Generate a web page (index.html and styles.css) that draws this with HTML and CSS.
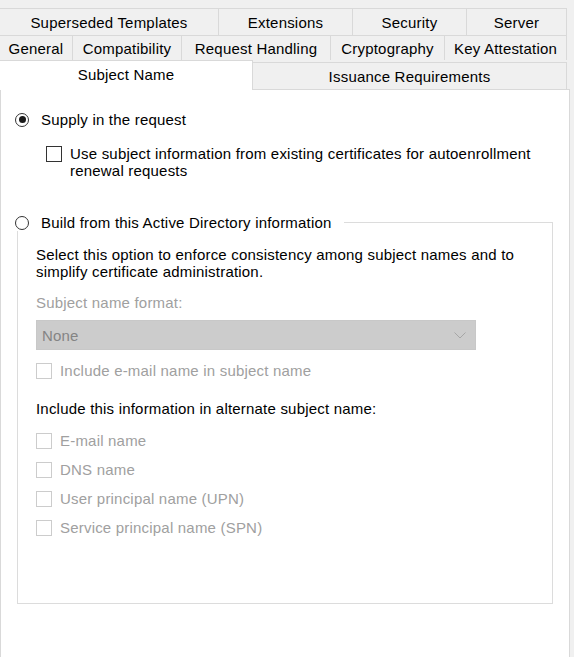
FILE: index.html
```html
<!DOCTYPE html>
<html>
<head>
<meta charset="utf-8">
<title>Subject Name</title>
<link rel="stylesheet" href="styles.css">
</head>
<body>
<div class="dialog">
  <div class="tabs">
    <div class="tab-row row1">
      <div class="tab t-superseded">Superseded Templates</div>
      <div class="tab t-extensions">Extensions</div>
      <div class="tab t-security">Security</div>
      <div class="tab t-server">Server</div>
    </div>
    <div class="tab-row row2">
      <div class="tab t-general">General</div>
      <div class="tab t-compat">Compatibility</div>
      <div class="tab t-request">Request Handling</div>
      <div class="tab t-crypto">Cryptography</div>
      <div class="tab t-key">Key Attestation</div>
    </div>
    <div class="tab-row row3">
      <div class="tab t-subject active">Subject Name</div>
      <div class="tab t-issuance">Issuance Requirements</div>
    </div>
  </div>

  <div class="panel">
    <div class="radio-row supply">
      <span class="radio checked"></span>
      <span class="label">Supply in the request</span>
    </div>

    <div class="check-row renew">
      <span class="checkbox"></span>
      <span class="label wrap">Use subject information from existing certificates for autoenrollment renewal requests</span>
    </div>

    <fieldset class="group">
      <legend class="group-legend">
        <span class="legend-inner">
          <span class="radio"></span>
          <span class="label">Build from this Active Directory information</span>
        </span>
      </legend>

      <p class="desc">Select this option to enforce consistency among subject names and to simplify certificate administration.</p>

      <div class="field-label disabled">Subject name format:</div>
      <div class="combo">
        <span class="combo-text">None</span>
        <svg class="chevron" width="12" height="7" viewBox="0 0 12 7"><polyline points="0.5,0.5 6,6 11.5,0.5" fill="none" stroke="#a6a6a6" stroke-width="1"/></svg>
      </div>

      <div class="check-row dis include-email">
        <span class="checkbox off"></span>
        <span class="label disabled">Include e-mail name in subject name</span>
      </div>

      <div class="alt-title">Include this information in alternate subject name:</div>

      <div class="alt-list">
        <div class="check-row dis">
          <span class="checkbox off"></span>
          <span class="label disabled">E-mail name</span>
        </div>
        <div class="check-row dis">
          <span class="checkbox off"></span>
          <span class="label disabled">DNS name</span>
        </div>
        <div class="check-row dis">
          <span class="checkbox off"></span>
          <span class="label disabled">User principal name (UPN)</span>
        </div>
        <div class="check-row dis">
          <span class="checkbox off"></span>
          <span class="label disabled">Service principal name (SPN)</span>
        </div>
      </div>
    </fieldset>
  </div>
</div>
</body>
</html>
```

FILE: styles.css
```css
html, body {
  margin: 0;
  padding: 0;
}

body {
  background: #f0f0f0;
  font-family: "Liberation Sans", Arial, sans-serif;
  font-size: 15px;
  letter-spacing: 0.2px;
  color: #000;
  width: 574px;
  height: 657px;
  overflow: hidden;
}

.dialog {
  width: 574px;
}

/* ---------- tabs ---------- */
.tabs {
  padding-top: 8px;
  margin-left: -1px;
}

.tab-row {
  display: flex;
}

.tab {
  box-sizing: border-box;
  border: 1px solid #d9d9d9;
  border-bottom: none;
  background: #f0f0f0;
  display: flex;
  align-items: center;
  justify-content: center;
  white-space: nowrap;
  flex: none;
}

.tab + .tab {
  margin-left: -1px;
}

.row1 .tab { height: 27px; }
.row2 .tab { height: 25px; }

.row3 {
  height: 29px;
  align-items: flex-end;
}

.row3 .tab { height: 27px; }

.row3 .tab.active {
  height: 30px;
  margin-bottom: -1px;
  background: #fff;
  position: relative;
  z-index: 1;
  padding-bottom: 2px;
}

.t-superseded { width: 220px; }
.t-extensions { width: 135px; }
.t-security   { width: 115px; }
.t-server     { width: 101px; }

.t-general    { width: 74px; }
.t-compat     { width: 110px; }
.t-request    { width: 150px; }
.t-crypto     { width: 115px; }
.t-key        { width: 123px; }

.t-subject    { width: 254px; }
.t-issuance   { width: 315px; }

/* ---------- panel ---------- */
.panel {
  box-sizing: border-box;
  width: 570px;
  height: 590px;
  background: #fff;
  border: 1px solid #d9d9d9;
  padding-top: 21px;
}

.label {
  line-height: 17px;
  white-space: nowrap;
}

.label.wrap {
  white-space: normal;
  max-width: 480px;
}

.disabled {
  color: #a0a0a0;
}

/* radio buttons */
.radio-row {
  display: flex;
  align-items: center;
  gap: 12px;
  height: 17px;
  margin-left: 14px;
}

.radio {
  box-sizing: border-box;
  width: 14px;
  height: 14px;
  border: 1px solid #333;
  border-radius: 50%;
  background: #fff;
  display: flex;
  align-items: center;
  justify-content: center;
  flex: none;
}

.radio.checked::after {
  content: "";
  width: 7px;
  height: 7px;
  border-radius: 50%;
  background: #1a1a1a;
}

/* checkboxes */
.check-row {
  display: flex;
  align-items: flex-start;
  gap: 8px;
}

.checkbox {
  box-sizing: border-box;
  width: 16px;
  height: 16px;
  border: 1px solid #333;
  background: #fff;
  flex: none;
  margin-top: 1px;
}

.checkbox.off {
  border-color: #cccccc;
}

.renew {
  margin-top: 17px;
  margin-left: 45px;
}

/* group box */
.group {
  box-sizing: border-box;
  width: 536px;
  margin: 35px 0 0 16px;
  padding: 0 18px 67px 18px;
  border: 1px solid #dcdcdc;
  min-inline-size: 0;
}

.group-legend {
  margin-left: -21px;
  padding: 0 12px 0 0;
}

.legend-inner {
  display: flex;
  align-items: center;
  gap: 12px;
  height: 17px;
}

.desc {
  margin: 15px 0 0 0;
  line-height: 17px;
}

.field-label {
  margin-top: 14px;
  line-height: 17px;
}

.combo {
  box-sizing: border-box;
  width: 440px;
  height: 30px;
  margin-top: 9px;
  background: #cccccc;
  border: 1px solid #c8c8c8;
  display: flex;
  align-items: center;
  justify-content: space-between;
  padding: 0 9px 0 5px;
}

.combo-text {
  color: #848484;
}

.chevron {
  display: block;
}

.include-email {
  margin-top: 12px;
}

.alt-title {
  margin-top: 21px;
  line-height: 17px;
}

.alt-list {
  margin-top: 15px;
  display: flex;
  flex-direction: column;
  gap: 12px;
}
```
